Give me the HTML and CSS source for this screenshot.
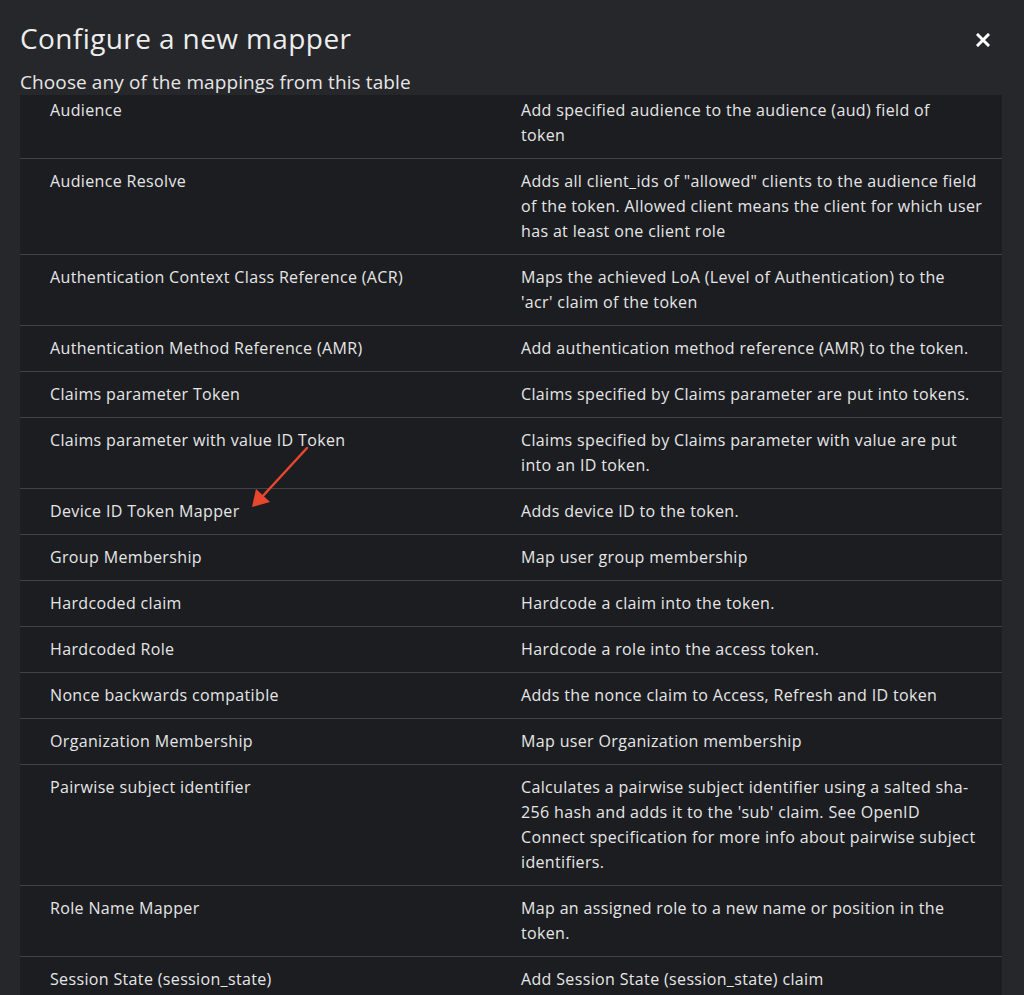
FILE: index.html
```html
<!DOCTYPE html>
<html lang="en">
<head>
<meta charset="utf-8">
<title>Configure a new mapper</title>
<link rel="stylesheet" href="styles.css">
</head>
<body>
<div class="modal">
  <header class="modal-header">
    <h1 class="modal-title">Configure a new mapper</h1>
    <button class="close" aria-label="Close">
      <svg width="14" height="14" viewBox="0 0 14 14"><path d="M2 2 L12 12 M12 2 L2 12" stroke="#ffffff" stroke-width="3" stroke-linecap="square"/></svg>
    </button>
  </header>
  <p class="modal-desc">Choose any of the mappings from this table</p>
  <div class="table-wrap">
    <div class="table">
      <div class="row first"><div class="name">Audience</div><div class="desc">Add specified audience to the audience (aud) field of<br>token</div></div>
      <div class="row"><div class="name">Audience Resolve</div><div class="desc">Adds all client_ids of "allowed" clients to the audience field of the token. Allowed client means the client for which user has at least one client role</div></div>
      <div class="row"><div class="name">Authentication Context Class Reference (ACR)</div><div class="desc">Maps the achieved LoA (Level of Authentication) to the<br>'acr' claim of the token</div></div>
      <div class="row"><div class="name">Authentication Method Reference (AMR)</div><div class="desc">Add authentication method reference (AMR) to the token.</div></div>
      <div class="row"><div class="name">Claims parameter Token</div><div class="desc">Claims specified by Claims parameter are put into tokens.</div></div>
      <div class="row"><div class="name">Claims parameter with value ID Token</div><div class="desc">Claims specified by Claims parameter with value are put into an ID token.</div></div>
      <div class="row"><div class="name">Device ID Token Mapper</div><div class="desc">Adds device ID to the token.</div></div>
      <div class="row"><div class="name">Group Membership</div><div class="desc">Map user group membership</div></div>
      <div class="row"><div class="name">Hardcoded claim</div><div class="desc">Hardcode a claim into the token.</div></div>
      <div class="row"><div class="name">Hardcoded Role</div><div class="desc">Hardcode a role into the access token.</div></div>
      <div class="row"><div class="name">Nonce backwards compatible</div><div class="desc">Adds the nonce claim to Access, Refresh and ID token</div></div>
      <div class="row"><div class="name">Organization Membership</div><div class="desc">Map user Organization membership</div></div>
      <div class="row"><div class="name">Pairwise subject identifier</div><div class="desc">Calculates a pairwise subject identifier using a salted sha-256 hash and adds it to the 'sub' claim. See OpenID Connect specification for more info about pairwise subject identifiers.</div></div>
      <div class="row"><div class="name">Role Name Mapper</div><div class="desc">Map an assigned role to a new name or position in the token.</div></div>
      <div class="row"><div class="name">Session State (session_state)</div><div class="desc">Add Session State (session_state) claim</div></div>
    </div>
  </div>
  <svg class="arrow" width="80" height="80" viewBox="0 0 80 80">
    <line x1="64" y1="6" x2="18" y2="56" stroke="#e8472e" stroke-width="2.5" stroke-linecap="round"/>
    <polygon points="9,65 13,47 27,60" fill="#e8472e"/>
  </svg>
</div>
</body>
</html>
```

FILE: styles.css
```css
html, body {
  margin: 0;
  padding: 0;
  background: #26272b;
}
body {
  width: 1024px;
  height: 995px;
  overflow: hidden;
  font-family: "Open Sans", "Noto Sans", sans-serif;
  color: #e6e6e6;
}
.modal {
  position: relative;
  padding: 0 22px 0 20px;
}
.modal-header {
  display: flex;
  align-items: center;
  justify-content: space-between;
  padding-top: 20px;
  height: 37px;
}
.modal-title {
  margin: 0;
  font-size: 28px;
  font-weight: 500;
  line-height: 37px;
  color: #ededed;
  letter-spacing: 0.4px;
}
.close {
  background: none;
  border: 0;
  padding: 0;
  margin-right: 12px;
  display: flex;
  margin-top: 2px;
}
.modal-desc {
  margin: 12px 0 0;
  font-size: 19px;
  line-height: 26px;
  letter-spacing: 0.1px;
  color: #e6e6e6;
}
.table {
  background: #1c1d21;
}
.row {
  display: grid;
  grid-template-columns: 485px 1fr;
  border-bottom: 1px solid #404246;
  font-size: 16px;
  line-height: 25px;
  letter-spacing: 0.35px;
}
.row > div {
  padding: 10px 16px;
}
.row > .name {
  padding-left: 30px;
}
.row.first > div {
  padding-top: 3px;
}
.arrow {
  position: absolute;
  left: 243px;
  top: 442px;
}
```
